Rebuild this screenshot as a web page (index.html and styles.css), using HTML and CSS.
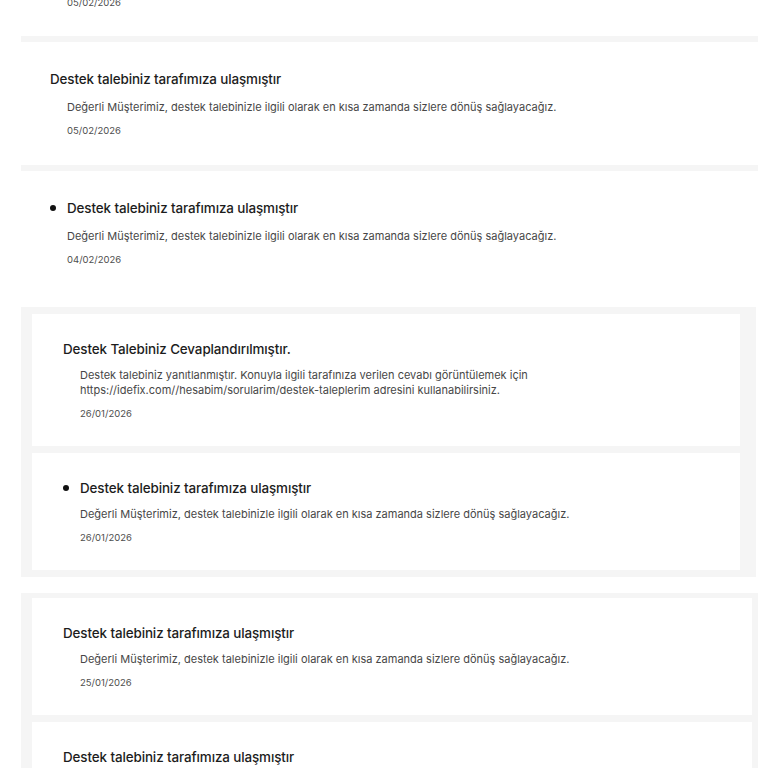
FILE: index.html
```html
<!DOCTYPE html>
<html lang="tr">
<head>
<meta charset="utf-8">
<title>Bildirimler</title>
<link rel="stylesheet" href="styles.css">
</head>
<body>
<main class="list">
  <section class="group group--flat">
    <article class="card card--clipped">
      <p class="card-date">05/02/2026</p>
    </article>
    <article class="card">
      <div class="card-head"><h3 class="card-title">Destek talebiniz tarafımıza ulaşmıştır</h3></div>
      <p class="card-desc">Değerli Müşterimiz, destek talebinizle ilgili olarak en kısa zamanda sizlere dönüş sağlayacağız.</p>
      <p class="card-date">05/02/2026</p>
    </article>
    <article class="card">
      <div class="card-head"><span class="dot"></span><h3 class="card-title">Destek talebiniz tarafımıza ulaşmıştır</h3></div>
      <p class="card-desc">Değerli Müşterimiz, destek talebinizle ilgili olarak en kısa zamanda sizlere dönüş sağlayacağız.</p>
      <p class="card-date">04/02/2026</p>
    </article>
  </section>

  <section class="group group--boxed group--narrow">
    <article class="card">
      <div class="card-head"><h3 class="card-title">Destek Talebiniz Cevaplandırılmıştır.</h3></div>
      <p class="card-desc">Destek talebiniz yanıtlanmıştır. Konuyla ilgili tarafınıza verilen cevabı görüntülemek için<br>https://idefix.com//hesabim/sorularim/destek-taleplerim adresini kullanabilirsiniz.</p>
      <p class="card-date">26/01/2026</p>
    </article>
    <article class="card">
      <div class="card-head"><span class="dot"></span><h3 class="card-title">Destek talebiniz tarafımıza ulaşmıştır</h3></div>
      <p class="card-desc">Değerli Müşterimiz, destek talebinizle ilgili olarak en kısa zamanda sizlere dönüş sağlayacağız.</p>
      <p class="card-date">26/01/2026</p>
    </article>
  </section>

  <section class="group group--boxed group--wide">
    <article class="card">
      <div class="card-head"><h3 class="card-title">Destek talebiniz tarafımıza ulaşmıştır</h3></div>
      <p class="card-desc">Değerli Müşterimiz, destek talebinizle ilgili olarak en kısa zamanda sizlere dönüş sağlayacağız.</p>
      <p class="card-date">25/01/2026</p>
    </article>
    <article class="card">
      <div class="card-head"><h3 class="card-title">Destek talebiniz tarafımıza ulaşmıştır</h3></div>
    </article>
  </section>
</main>
</body>
</html>
```

FILE: styles.css
```css
* { box-sizing: border-box; }

html, body {
  margin: 0;
  padding: 0;
  background: #ffffff;
  height: 768px;
  overflow: hidden;
}

body {
  font-family: Inter, "Noto Sans", "Liberation Sans", sans-serif;
  color: #222222;
}

.list {
  margin: -4px 10px 0 21px;
  display: flex;
  flex-direction: column;
  gap: 13px;
}

.group {
  background: #f5f5f5;
  display: flex;
  flex-direction: column;
}

.group--flat {
  gap: 6px;
}

.group--boxed {
  gap: 7px;
}

.group--narrow {
  padding: 7px 16px 7px 11px;
  margin-right: 2px;
}

.group--wide {
  padding: 5px 6px 0 11px;
  margin-top: 3px;
}

.card {
  background: #ffffff;
  padding: 27px 30px 27px 29px;
}

.card--clipped {
  padding-top: 0;
  padding-bottom: 26px;
}

.card--clipped .card-date {
  margin-top: 0;
}

.group--boxed .card {
  padding: 25px 30px 25px 31px;
}

.group--boxed .card-desc {
  margin-top: 9px;
}

.group--boxed .card-date {
  margin-top: 9px;
}

.card-head {
  display: flex;
  align-items: center;
  height: 20px;
}

.dot {
  width: 6px;
  height: 6px;
  border-radius: 50%;
  background: #111111;
  margin-right: 11px;
  flex: none;
}

.card-title {
  margin: 0;
  font-size: 13.4px;
  font-weight: 500;
  line-height: 20px;
  color: #1c1c1c;
  letter-spacing: -0.1px;
}

.card-desc {
  margin: 11px 0 0 17px;
  font-size: 11px;
  line-height: 15px;
  color: #474747;
}

.card-date {
  margin: 9px 0 0 17px;
  font-size: 9.5px;
  line-height: 14px;
  color: #4e4e4e;
}
```
